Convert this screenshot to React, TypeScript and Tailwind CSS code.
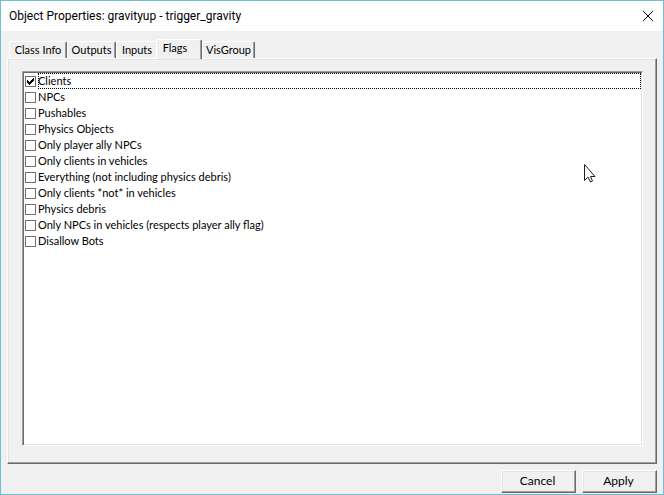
import { useState } from "react";

const tabs = [
  { name: "Class Info", width: "w-[58px]" },
  { name: "Outputs", width: "w-[49px]" },
  { name: "Inputs", width: "w-[42px]" },
  { name: "Flags", width: "w-[46px]" },
  { name: "VisGroup", width: "w-[53px]" },
];

const flags = [
  "Clients",
  "NPCs",
  "Pushables",
  "Physics Objects",
  "Only player ally NPCs",
  "Only clients in vehicles",
  "Everything (not including physics debris)",
  "Only clients *not* in vehicles",
  "Physics debris",
  "Only NPCs in vehicles (respects player ally flag)",
  "Disallow Bots",
];

const raised =
  "border border-t-white border-l-white border-r-[#696969] border-b-[#696969] shadow-[inset_-1px_-1px_#a0a0a0,inset_1px_1px_#e3e3e3]";

function Tab({ name, width, active }: { name: string; width: string; active: boolean }) {
  return (
    <button
      role="tab"
      aria-selected={active}
      className={`${width} shrink-0 whitespace-nowrap rounded-t-xs border-t border-l border-r border-t-white border-l-white border-r-[#696969] bg-[#f0f0f0] text-center shadow-[inset_-1px_0_#a0a0a0] ${
        active ? "z-10 -mb-px -ml-0.5 h-5 pr-2 pb-1" : "h-[17px]"
      }`}
    >
      {name}
    </button>
  );
}

function FlagRow({ name, first }: { name: string; first: boolean }) {
  const [checked, setChecked] = useState(first);
  return (
    <label className="flex h-4 items-center gap-0.5">
      <span className="grid shrink-0">
        <input
          type="checkbox"
          checked={checked}
          onChange={(e) => setChecked(e.target.checked)}
          className="col-start-1 row-start-1 size-[11px] appearance-none border border-[#707070] bg-white"
        />
        {checked && (
          <svg
            viewBox="0 0 11 11"
            className="pointer-events-none col-start-1 row-start-1 size-[11px]"
            shapeRendering="crispEdges"
          >
            <path
              d="M2 4h1v3h-1zM3 5h1v3h-1zM4 6h1v3h-1zM5 5h1v3h-1zM6 4h1v3h-1zM7 3h1v3h-1zM8 2h1v3h-1z"
              fill="#000"
            />
          </svg>
        )}
      </span>
      <span
        className={`flex h-4 grow items-center whitespace-nowrap border border-dotted ${
          first ? "border-black" : "border-transparent"
        }`}
      >
        <span className="-ml-px">{name}</span>
      </span>
    </label>
  );
}

function DialogButton({ children }: { children: string }) {
  return (
    <button className={`h-[23px] w-[75px] bg-[#f0f0f0] pr-0.5 pb-0.5 text-center text-[12px] ${raised}`}>
      {children}
    </button>
  );
}

export default function App() {
  return (
    <div className="relative flex min-h-screen flex-col border border-[#6dbfd2] bg-[#f0f0f0] font-[Lato,Arial,sans-serif] text-[11px] leading-4 text-black">
      <header className="flex h-[30px] items-center justify-between bg-white pr-[9px] pl-2">
        <h1 className="font-[Roboto,'Segoe_UI',sans-serif] text-[12px] leading-4">
          Object Properties: gravityup - trigger_gravity
        </h1>
        <button aria-label="Close" className="size-3">
          <svg viewBox="0 0 12 12" className="size-3">
            <path d="M1 1l10 10M11 1L1 11" stroke="#000" />
          </svg>
        </button>
      </header>

      <main className="flex grow flex-col px-1.5 pt-2 pb-1.5">
        <div role="tablist" className="flex items-end pl-0.5">
          {tabs.map((t) => (
            <Tab key={t.name} {...t} active={t.name === "Flags"} />
          ))}
        </div>
        <section className={`flex grow flex-col pt-3 pr-[13px] pb-[17px] pl-3.5 ${raised}`}>
          <div className="grow border border-t-[#a0a0a0] border-r-white border-b-white border-l-[#a0a0a0] bg-white pt-px pr-px pl-0.5 shadow-[inset_1px_1px_#696969,inset_-1px_-1px_#e3e3e3]">
            {flags.map((f, i) => (
              <FlagRow key={f} name={f} first={i === 0} />
            ))}
          </div>
        </section>
      </main>

      <footer className="flex justify-end gap-1.5 pr-1.5 pb-px">
        <DialogButton>Cancel</DialogButton>
        <DialogButton>Apply</DialogButton>
      </footer>

      <svg viewBox="0 0 12 20" className="absolute top-[162px] left-[583px] h-5 w-3">
        <path
          d="M.5 1.500v16l3.500-3.500 2.500 5 2-1-2-4.500h4.500z"
          fill="#fff"
          stroke="#1a1a2a"
        />
      </svg>
    </div>
  );
}
